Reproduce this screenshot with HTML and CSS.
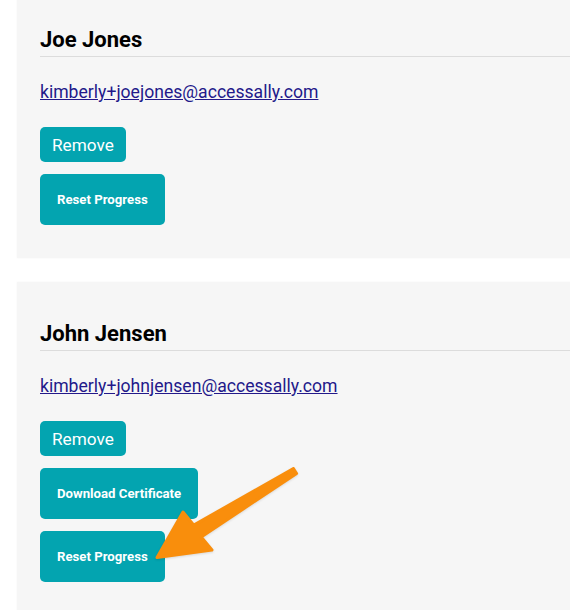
FILE: index.html
```html
<!DOCTYPE html>
<html lang="en">
<head>
<meta charset="utf-8">
<title>Team members</title>
<link rel="stylesheet" href="styles.css">
</head>
<body>
<main class="page">
  <section class="card card-first">
    <h2 class="name">Joe Jones</h2>
    <p class="email"><a href="#">kimberly+joejones@accessally.com</a></p>
    <div class="actions">
      <button class="btn btn-small">Remove</button>
      <button class="btn btn-large">Reset Progress</button>
    </div>
  </section>
  <section class="card">
    <h2 class="name">John Jensen</h2>
    <p class="email"><a href="#">kimberly+johnjensen@accessally.com</a></p>
    <div class="actions">
      <button class="btn btn-small">Remove</button>
      <button class="btn btn-large">Download Certificate</button>
      <button class="btn btn-large">Reset Progress</button>
    </div>
  </section>
  <svg class="arrow" width="570" height="610" viewBox="0 0 570 610" aria-hidden="true">
    <path d="M296.6 473.5 L201.2 536.9 L212 550 L157 557.5 L183 512 L193.8 525.1 L293.4 468.5 Z" fill="#f98e0c" stroke="#f98e0c" stroke-width="3" stroke-linejoin="round"/>
  </svg>
</main>
</body>
</html>
```

FILE: styles.css
```css
html, body {
  margin: 0;
  padding: 0;
  background: #ffffff;
  overflow: hidden;
}

.page {
  position: relative;
  width: 570px;
  height: 610px;
  overflow: hidden;
  font-family: Roboto, "Liberation Sans", Arial, sans-serif;
}

.card {
  background: #f6f6f6;
  margin: 0 -40px 24px 17px;
  padding: 39px 0 33px 23px;
  box-shadow: 0 0 2px rgba(0, 0, 0, 0.04);
}

.card-first {
  margin-top: -12px;
}

.name {
  margin: 0;
  padding-bottom: 4px;
  border-bottom: 1px solid #dcdcdc;
  font-size: 22px;
  line-height: 25px;
  font-weight: 700;
  color: #000000;
}

.email {
  margin: 23px 0 0;
  font-size: 17.6px;
  line-height: 25px;
}

.email a {
  color: #23198a;
  text-decoration: underline;
}

.actions {
  display: flex;
  flex-direction: column;
  align-items: flex-start;
  gap: 12px;
  margin-top: 22px;
}

.btn {
  border: none;
  border-radius: 5px;
  background: #03a4b0;
  color: #ffffff;
  font-family: Roboto, "Liberation Sans", Arial, sans-serif;
  cursor: pointer;
}

.btn-small {
  height: 35px;
  padding: 0 12px;
  font-size: 17.2px;
  font-weight: 400;
}

.btn-large {
  height: 51px;
  padding: 0 17px;
  font-size: 13.2px;
  font-weight: 700;
}

.arrow {
  position: absolute;
  left: 0;
  top: 0;
  pointer-events: none;
  filter: drop-shadow(0 1px 1px rgba(0, 0, 0, 0.12));
}
```
